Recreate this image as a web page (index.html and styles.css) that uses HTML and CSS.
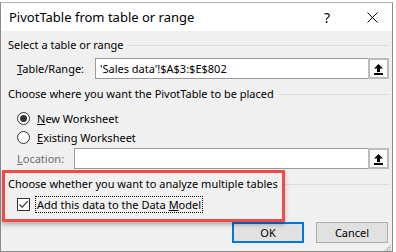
FILE: index.html
```html
<!DOCTYPE html>
<html lang="en">
<head>
  <meta charset="UTF-8">
  <title>PivotTable from table or range</title>
  <link rel="stylesheet" href="styles.css">
</head>
<body>
  <div class="dialog">
    <div class="titlebar">
      <span class="title">PivotTable from table or range</span>
      <span class="help">?</span>
      <span class="close">
        <svg width="11" height="11" viewBox="0 0 11 11"><path d="M0.5 0.5 L10.5 10.5 M10.5 0.5 L0.5 10.5" stroke="#000" stroke-width="1" fill="none"/></svg>
      </span>
    </div>
    <div class="content">
      <div class="group">Select a table or range</div>
      <div class="field">
        <span class="field-label label-range"><u>T</u>able/Range:</span>
        <div class="refedit">
          <div class="refedit-input">'Sales data'!$A$3:$E$802</div>
          <span class="refedit-btn">
            <svg width="11" height="12" viewBox="0 0 11 12"><path d="M5.5 1 L10 5.5 H7 V9 H4 V5.5 H1 Z" fill="#000"/><rect x="1" y="10" width="9" height="2" fill="#000"/></svg>
          </span>
        </div>
      </div>
      <div class="group">Choose where you want the PivotTable to be placed</div>
      <div class="option option-new"><span class="radio checked"></span><span><u>N</u>ew Worksheet</span></div>
      <div class="option option-existing"><span class="radio"></span><span><u>E</u>xisting Worksheet</span></div>
      <div class="field field-location">
        <span class="field-label label-location disabled"><u>L</u>ocation:</span>
        <div class="refedit">
          <div class="refedit-input"></div>
          <span class="refedit-btn">
            <svg width="11" height="12" viewBox="0 0 11 12"><path d="M5.5 1 L10 5.5 H7 V9 H4 V5.5 H1 Z" fill="#000"/><rect x="1" y="10" width="9" height="2" fill="#000"/></svg>
          </span>
        </div>
      </div>
      <div class="group group-tables">Choose whether you want to analyze multiple tables</div>
      <div class="option option-check">
        <span class="checkbox">
          <svg width="13" height="13" viewBox="0 0 13 13"><path d="M2.5 6.5 L5.2 9.2 L10.8 3.2" stroke="#333" stroke-width="1.2" fill="none"/></svg>
        </span>
        <span class="focus">Add this data to the Data <u>M</u>odel</span>
      </div>
      <div class="actions">
        <span class="btn btn-default">OK</span>
        <span class="btn btn-cancel">Cancel</span>
      </div>
      <span class="grip"></span>
    </div>
  </div>
  <div class="highlight"></div>
</body>
</html>
```

FILE: styles.css
```css
body {
  margin: 0;
  background: #fff;
  font-family: "Noto Sans", "Open Sans", sans-serif;
  font-size: 11px;
  color: #000;
  position: relative;
  height: 252px;
  overflow: hidden;
}

.dialog {
  margin-top: 2px;
  width: 393px;
  height: 250px;
  box-sizing: border-box;
  border: 1px solid #8a8a8a;
  border-top-color: #b0b0b0;
  display: flex;
  flex-direction: column;
}

.titlebar {
  height: 28px;
  flex: none;
  background: #fff;
  display: flex;
  align-items: center;
  padding-left: 8px;
}
.title {
  font-size: 13px;
  flex: 1;
}
.help {
  font-size: 14px;
  width: 52px;
  text-align: center;
}
.close {
  width: 38px;
  display: flex;
  justify-content: center;
  margin-right: 1px;
}

.content {
  flex: 1;
  background: #f0f0f0;
  padding: 6px 3px 0 7px;
  position: relative;
}

.group {
  display: flex;
  align-items: center;
  height: 16px;
  line-height: 16px;
  white-space: nowrap;
  margin-top: 7px;
}
.content > .group:first-child {
  margin-top: 0;
}
.group::after {
  content: "";
  flex: 1;
  height: 1px;
  background: #dcdcdc;
  margin-left: 5px;
}

.field {
  display: flex;
  align-items: center;
  margin-top: 5px;
  padding-left: 9px;
}
.field-location {
  margin-top: 3px;
}
.field-label {
  flex: none;
}
.label-range { width: 78px; }
.label-location { width: 57px; }
.disabled { color: #6d6d6d; }

.refedit {
  flex: 1;
  display: flex;
  height: 21px;
}
.refedit-input {
  flex: 1;
  background: #fff;
  border: 1px solid #9a9a9a;
  border-right: none;
  padding: 0 4px;
  line-height: 19px;
}
.refedit-btn {
  width: 21px;
  box-sizing: border-box;
  border: 2px solid #bcbcbc;
  background: #fbfbfb;
  display: flex;
  align-items: center;
  justify-content: center;
}

.option {
  display: flex;
  align-items: center;
  height: 16px;
  padding-left: 9px;
  gap: 7px;
}
.option-new { margin-top: 8px; }
.option-existing { margin-top: 3px; }
.option-check {
  margin-top: 4px;
  height: 17px;
  gap: 5px;
}

.radio {
  width: 13px;
  height: 13px;
  box-sizing: border-box;
  border: 1px solid #333;
  border-radius: 50%;
  background: #fff;
  display: flex;
  align-items: center;
  justify-content: center;
}
.radio.checked::after {
  content: "";
  width: 7px;
  height: 7px;
  border-radius: 50%;
  background: #333;
}

.checkbox {
  width: 13px;
  height: 13px;
  box-sizing: border-box;
  border: 1px solid #333;
  background: #fff;
  display: flex;
}
.checkbox svg { margin: -1px; }

.focus {
  border: 1px dotted #000;
  padding: 0 1px;
  line-height: 15px;
}

.actions {
  display: flex;
  justify-content: flex-end;
  gap: 12px;
  margin-top: 9px;
  margin-right: 1px;
}
.btn {
  width: 72px;
  height: 21px;
  box-sizing: border-box;
  background: #e1e1e1;
  border: 1px solid #adadad;
  display: flex;
  align-items: center;
  justify-content: center;
}
.btn-default {
  border: 2px solid #0078d7;
}

.grip {
  position: absolute;
  right: 1px;
  bottom: 0;
  width: 7px;
  height: 7px;
  background-image: radial-gradient(circle, #b8b8b8 0.8px, transparent 1px);
  background-size: 2.4px 2.4px;
  clip-path: polygon(100% 0, 100% 100%, 0 100%);
}

.highlight {
  position: absolute;
  left: 2px;
  top: 170px;
  width: 283px;
  height: 52px;
  box-sizing: border-box;
  border: 3px solid #f24a4a;
  box-shadow: 0 3px 4px rgba(0, 0, 0, 0.25);
}
```
